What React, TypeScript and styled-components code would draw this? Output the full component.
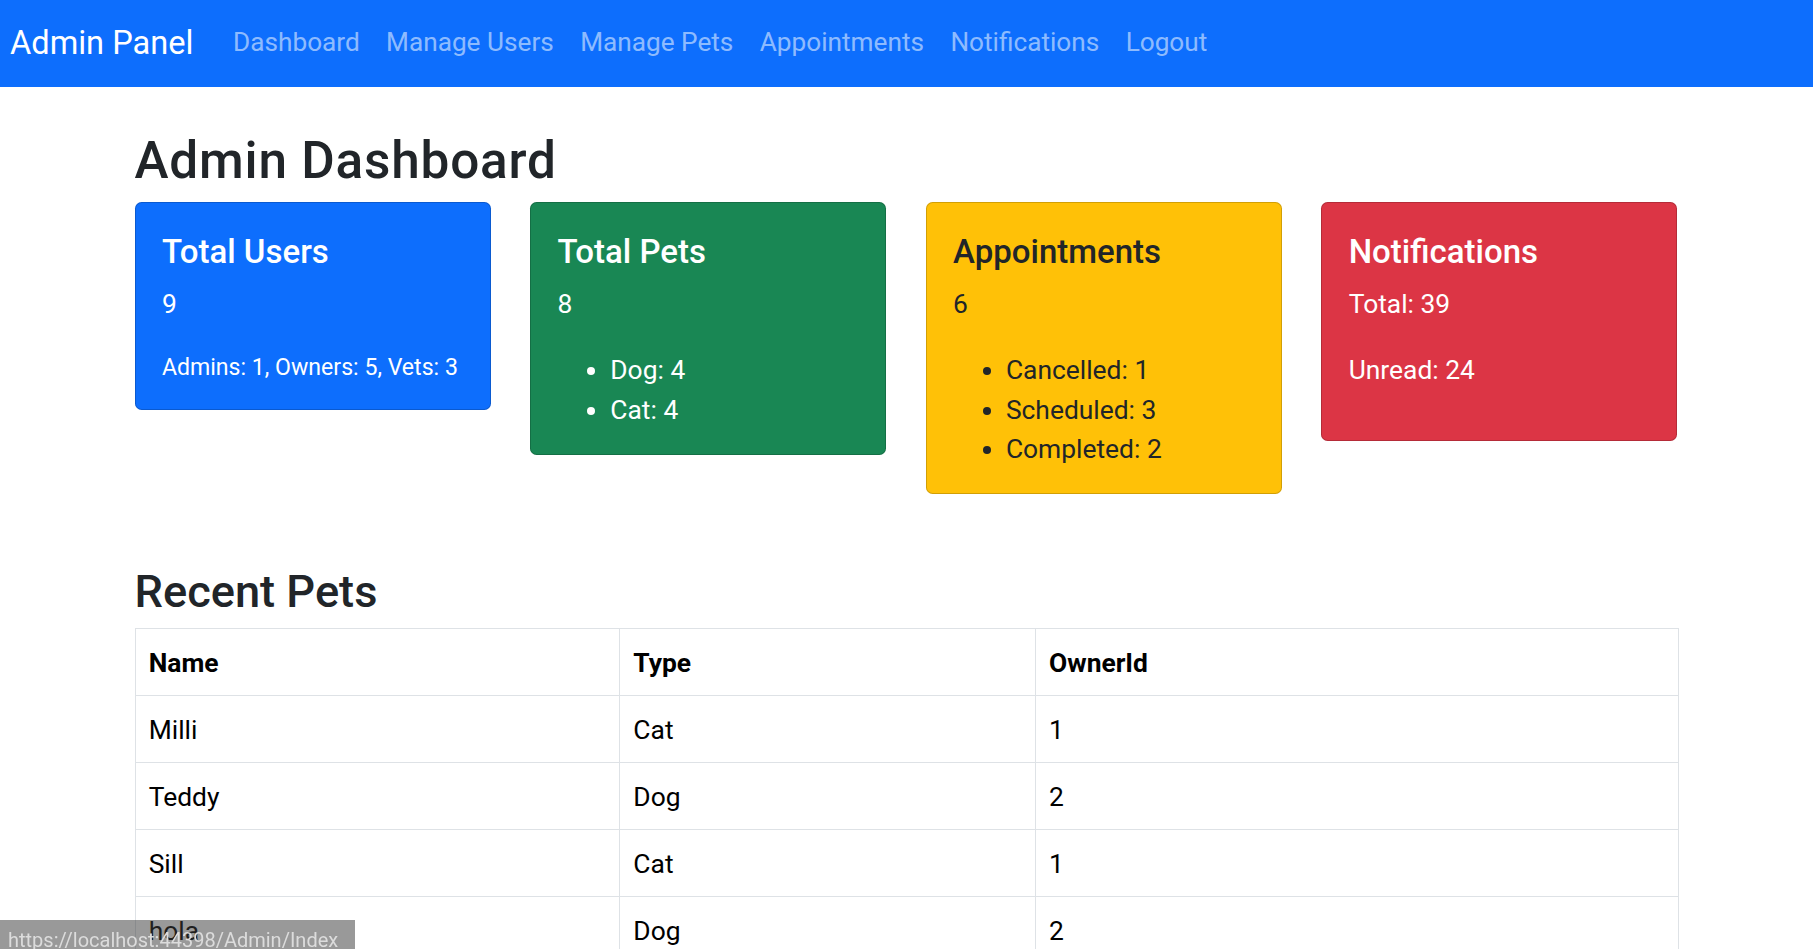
import React from "react";
import styled, { createGlobalStyle, css } from "styled-components";

const GlobalStyle = createGlobalStyle`
  *, *::before, *::after { box-sizing: border-box; }
  body {
    margin: 0;
    font-family: Roboto, "Noto Sans", Arial, sans-serif;
    font-size: 26.4px;
    line-height: 1.5;
    color: #212529;
    background: #fff;
  }
`;

const Navbar = styled.nav`
  height: 87px;
  background: #0d6efd;
  display: flex;
  align-items: center;
  padding-left: 10px;
  padding-bottom: 1px;
`;

const Brand = styled.a`
  font-size: 32.6px;
  line-height: 1.5;
  color: #fff;
  text-decoration: none;
  margin-right: 26.4px;
`;

const NavList = styled.ul`
  display: flex;
  list-style: none;
  margin: 0;
  padding: 0;
`;

const NavLink = styled.a`
  display: block;
  padding: 0 13.2px;
  font-size: 26.2px;
  line-height: 1.5;
  color: rgba(255, 255, 255, 0.55);
  text-decoration: none;
`;

const Main = styled.main`
  width: 1544px;
  margin: 0 auto;
  padding-top: 43px;
`;

const PageTitle = styled.h2`
  font-size: 51.3px;
  font-weight: 500;
  line-height: 1.2;
  letter-spacing: 0.8px;
  margin: 0 0 10.2px;
`;

const CardRow = styled.div`
  display: grid;
  grid-template-columns: repeat(4, 356px);
  column-gap: 39.6px;
  align-items: start;
`;

type Variant = "primary" | "success" | "warning" | "danger";

const variants: Record<Variant, { bg: string; fg: string }> = {
  primary: { bg: "#0d6efd", fg: "#fff" },
  success: { bg: "#198754", fg: "#fff" },
  warning: { bg: "#ffc107", fg: "#212529" },
  danger: { bg: "#dc3545", fg: "#fff" },
};

const Card = styled.div<{ $variant: Variant }>`
  border-radius: 6.6px;
  padding: 30.4px 27.4px 24.4px;
  background: ${(p) => variants[p.$variant].bg};
  color: ${(p) => variants[p.$variant].fg};
  box-shadow: inset 0 0 0 1px rgba(0, 0, 0, 0.175);
`;

const CardTitle = styled.h5`
  font-size: 33px;
  font-weight: 500;
  line-height: 1.2;
  margin: 0 0 13.2px;
`;

const CardText = styled.p<{ $flush?: boolean; $small?: boolean }>`
  margin: 0 0 ${(p) => (p.$flush ? "0" : "26.4px")};
  ${(p) =>
    p.$small &&
    css`
      font-size: 23.1px;
    `}
`;

const CardList = styled.ul`
  margin: 0;
  padding-left: 52.8px;
`;

const SectionTitle = styled.h3`
  font-size: 45.2px;
  font-weight: 500;
  line-height: 1.2;
  margin: 70.5px 0 9px;
`;

const Table = styled.table`
  width: 1544px;
  border-collapse: collapse;
  color: #000;
  font-size: 26.4px;
  line-height: 1.5;
`;

const cellBase = css`
  padding: 15.5px 13.2px 10.9px;
  border: 1px solid #dee2e6;
`;

const Th = styled.th<{ $w: number }>`
  ${cellBase}
  width: ${(p) => p.$w}px;
  text-align: left;
  font-weight: 700;
`;

const Td = styled.td`
  ${cellBase}
`;

const StatusBar = styled.div`
  position: fixed;
  left: 0;
  bottom: 0;
  width: 355px;
  height: 29px;
  overflow: hidden;
  background: rgba(60, 60, 60, 0.52);
  color: #dcdcdc;
  font-family: Roboto, Arial, sans-serif;
  font-size: 20px;
  line-height: 20px;
  padding: 10px 0 0 8px;
  white-space: nowrap;
`;

const pets = [
  { name: "Milli", type: "Cat", owner: 1 },
  { name: "Teddy", type: "Dog", owner: 2 },
  { name: "Sill", type: "Cat", owner: 1 },
  { name: "hola", type: "Dog", owner: 2 },
];

export default function App() {
  return (
    <>
      <GlobalStyle />
      <Navbar>
        <Brand href="#">Admin Panel</Brand>
        <NavList>
          {["Dashboard", "Manage Users", "Manage Pets", "Appointments", "Notifications", "Logout"].map(
            (l) => (
              <li key={l}>
                <NavLink href="#">{l}</NavLink>
              </li>
            )
          )}
        </NavList>
      </Navbar>
      <Main>
        <PageTitle>Admin Dashboard</PageTitle>
        <CardRow>
          <Card $variant="primary">
            <CardTitle>Total Users</CardTitle>
            <CardText>9</CardText>
            <CardText $small $flush>
              Admins: 1, Owners: 5, Vets: 3
            </CardText>
          </Card>
          <Card $variant="success">
            <CardTitle>Total Pets</CardTitle>
            <CardText>8</CardText>
            <CardList>
              <li>Dog: 4</li>
              <li>Cat: 4</li>
            </CardList>
          </Card>
          <Card $variant="warning">
            <CardTitle>Appointments</CardTitle>
            <CardText>6</CardText>
            <CardList>
              <li>Cancelled: 1</li>
              <li>Scheduled: 3</li>
              <li>Completed: 2</li>
            </CardList>
          </Card>
          <Card $variant="danger">
            <CardTitle>Notifications</CardTitle>
            <CardText>Total: 39</CardText>
            <CardText>Unread: 24</CardText>
          </Card>
        </CardRow>
        <SectionTitle>Recent Pets</SectionTitle>
        <Table>
          <thead>
            <tr>
              <Th $w={485}>Name</Th>
              <Th $w={416}>Type</Th>
              <Th $w={643}>OwnerId</Th>
            </tr>
          </thead>
          <tbody>
            {pets.map((p) => (
              <tr key={p.name}>
                <Td>{p.name}</Td>
                <Td>{p.type}</Td>
                <Td>{p.owner}</Td>
              </tr>
            ))}
          </tbody>
        </Table>
      </Main>
      <StatusBar>https://localhost:44398/Admin/Index</StatusBar>
    </>
  );
}
